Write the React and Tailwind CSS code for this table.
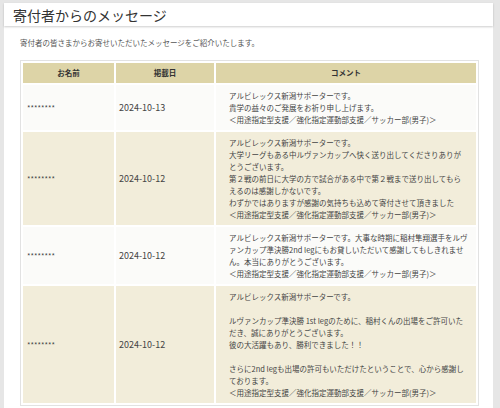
const rows = [
  {
    name: "********",
    date: "2024-10-13",
    lines: [
      "アルビレックス新潟サポーターです。",
      "貴学の益々のご発展をお祈り申し上げます。",
      "＜用途指定型支援／強化指定運動部支援／サッカー部(男子)＞",
    ],
  },
  {
    name: "********",
    date: "2024-10-12",
    lines: [
      "アルビレックス新潟サポーターです。",
      "大学リーグもある中ルヴァンカップへ快く送り出してくださりありが",
      "とうございます。",
      "第２戦の前日に大学の方で試合がある中で第２戦まで送り出してもら",
      "えるのは感謝しかないです。",
      "わずかではありますが感謝の気持ちも込めて寄付させて頂きました",
      "＜用途指定型支援／強化指定運動部支援／サッカー部(男子)＞",
    ],
  },
  {
    name: "********",
    date: "2024-10-12",
    lines: [
      "アルビレックス新潟サポーターです。大事な時期に稲村隼翔選手をルヴ",
      "ァンカップ準決勝2nd legにもお貸しいただいて感謝してもしきれませ",
      "ん。本当にありがとうございます。",
      "＜用途指定型支援／強化指定運動部支援／サッカー部(男子)＞",
    ],
  },
  {
    name: "********",
    date: "2024-10-12",
    lines: [
      "アルビレックス新潟サポーターです。",
      "",
      "ルヴァンカップ準決勝 1st legのために、稲村くんの出場をご許可いた",
      "だき、誠にありがとうございます。",
      "彼の大活躍もあり、勝利できました！！",
      "",
      "さらに2nd legも出場の許可もいただけたということで、心から感謝し",
      "ております。",
      "＜用途指定型支援／強化指定運動部支援／サッカー部(男子)＞",
    ],
  },
];

export default function App() {
  return (
    <div
      className="min-h-screen bg-[#e6e6e6] pl-1 pr-[7px] pt-[3px] text-[#444]"
      style={{ fontFamily: '"Noto Sans CJK JP", "Noto Sans", sans-serif' }}
    >
      {/* Title */}
      <div className="bg-white h-[23px] flex items-center px-[9px] shadow-[0_1px_2px_rgba(0,0,0,0.2)] relative">
        <h1 className="text-[14px] text-[#333] leading-none">寄付者からのメッセージ</h1>
      </div>

      {/* Content */}
      <div className="bg-white pl-4 pr-[14px] pt-[11px] pb-4">
        <p className="text-[7.5px] leading-[12px] text-[#555]">
          寄付者の皆さまからお寄せいただいたメッセージをご紹介いたします。
        </p>

        <table className="mt-[11px] w-full border-separate border-spacing-[2px] border border-[#e2e2e2] text-[7.5px] leading-[12px]">
          <thead>
            <tr className="bg-[#ddd4a7] h-[20px]">
              <th className="w-[91px] font-bold text-[#333]">お名前</th>
              <th className="w-[98px] font-bold text-[#333]">掲載日</th>
              <th className="font-bold text-[#333]">コメント</th>
            </tr>
          </thead>
          <tbody>
            {rows.map((r, i) => (
              <tr key={i} className={i % 2 === 0 ? "bg-[#fbfbf9]" : "bg-[#f2edda]"}>
                <td className="px-1 align-middle">{r.name}</td>
                <td className="px-[3px] align-middle text-[9px]">{r.date}</td>
                <td className="pl-[13px] pr-1 py-[4.5px] whitespace-nowrap">
                  {r.lines.map((l, j) => (
                    <div key={j} className="h-[12px]">{l}</div>
                  ))}
                </td>
              </tr>
            ))}
          </tbody>
        </table>
      </div>
    </div>
  );
}
